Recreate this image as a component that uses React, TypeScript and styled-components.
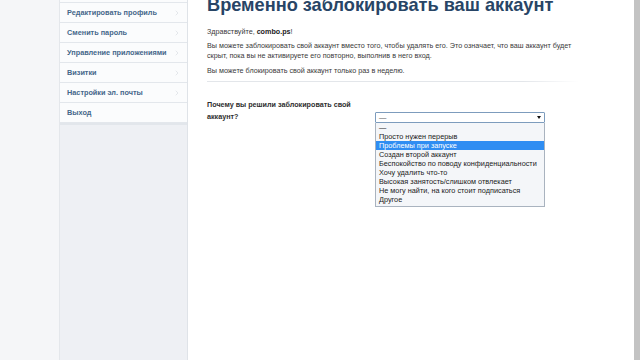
import React from 'react'
import styled, { createGlobalStyle } from 'styled-components'
import { ChevronRight } from 'lucide-react'

const GlobalStyle = createGlobalStyle`
  html, body {
    margin: 0;
    padding: 0;
    height: 100%;
    overflow: hidden;
    background: #f5f6f8;
    font-family: "Liberation Sans", Arial, sans-serif;
  }
  #root {
    height: 100%;
  }
`

const Viewport = styled.div`
  display: flex;
  height: 100vh;
  overflow: hidden;
`

/* the page is scrolled down a little, so everything starts above the top edge */
const Page = styled.div`
  flex: 1;
  display: flex;
  margin-top: -17px;
  min-height: calc(100vh + 17px);
`

const Gutter = styled.div`
  width: 59px;
  flex-shrink: 0;
  background: #f5f6f8;
  border-right: 1px solid #e4e7eb;
`

const Sidebar = styled.nav`
  width: 127px;
  flex-shrink: 0;
  background: #eef0f4;
  border-right: 1px solid #dfe3e8;
`

const Menu = styled.ul`
  list-style: none;
  margin: 0;
  padding: 0;
  border-bottom: 2px solid #e2e6eb;
`

const MenuItem = styled.li`
  height: 19px;
  display: flex;
  align-items: center;
  justify-content: space-between;
  padding: 0 6px 0 7px;
  background: #fbfcfd;
  border-bottom: 1px solid #e3e7ec;
  font-size: 7.3px;
  font-weight: bold;
  color: #45678a;
  white-space: nowrap;

  svg {
    color: #d8dce2;
    flex-shrink: 0;
  }
`

const Content = styled.main`
  flex: 1;
  background: #fff;
  padding: 10px 0 0 19px;
`

const Inner = styled.div`
  width: 372px;
`

const Title = styled.h1`
  margin: 0;
  font-size: 18.2px;
  line-height: 24px;
  font-weight: bold;
  color: #284566;
  white-space: nowrap;
`

const Text = styled.p<{ $gap?: number }>`
  margin: ${(p) => p.$gap ?? 0}px 0 0;
  font-size: 7.2px;
  line-height: 10px;
  color: #3a3a3a;

  b {
    color: #222;
  }
`

const Divider = styled.hr`
  margin: 5px 0 0;
  border: 0;
  height: 1px;
  background: linear-gradient(to right, #e3e6ea 0%, #e3e6ea 85%, #fff 100%);
`

const FormRow = styled.div`
  display: grid;
  grid-template-columns: 168px 170px;
  margin-top: 17px;
`

const Label = styled.label`
  font-size: 7.2px;
  line-height: 12px;
  font-weight: bold;
  color: #2e2e2e;
  padding-right: 14px;
`

const SelectWrap = styled.div`
  margin-top: 13px;
  display: flex;
  flex-direction: column;
`

const SelectBox = styled.div`
  height: 9px;
  border: 1px solid #7d9cbd;
  border-radius: 1px;
  background: #fff;
  display: flex;
  align-items: center;
  justify-content: space-between;
  padding: 0 3px;
  font-size: 7.4px;
  color: #555;
`

const Arrow = styled.span`
  width: 0;
  height: 0;
  border-left: 2px solid transparent;
  border-right: 2px solid transparent;
  border-top: 3px solid #111;
`

const Options = styled.ul`
  list-style: none;
  margin: 0;
  padding: 0 0 2px;
  background: #f4f6f9;
  border: 1px solid #a9b3bf;
  border-top: 0;
`

const Option = styled.li<{ $active?: boolean }>`
  height: 9px;
  line-height: 9px;
  padding: 0 3px;
  font-size: 7.3px;
  white-space: nowrap;
  color: ${(p) => (p.$active ? '#fff' : '#222')};
  background: ${(p) => (p.$active ? '#2f8df2' : 'transparent')};
`

const ScrollTrack = styled.div`
  width: 6px;
  flex-shrink: 0;
  background: #c3c3c3;
`

const menu = [
  { text: 'Общее', arrow: true },
  { text: 'Редактировать профиль', arrow: true },
  { text: 'Сменить пароль', arrow: true },
  { text: 'Управление приложениями', arrow: true },
  { text: 'Визитки', arrow: true },
  { text: 'Настройки эл. почты', arrow: true },
  { text: 'Выход', arrow: false },
]

const reasons = [
  '—',
  'Просто нужен перерыв',
  'Проблемы при запуске',
  'Создан второй аккаунт',
  'Беспокойство по поводу конфиденциальности',
  'Хочу удалить что-то',
  'Высокая занятость/слишком отвлекает',
  'Не могу найти, на кого стоит подписаться',
  'Другое',
]

export default function App() {
  return (
    <Viewport>
      <GlobalStyle />
      <Page>
        <Gutter />
        <Sidebar>
          <Menu>
            {menu.map((m) => (
              <MenuItem key={m.text}>
                <span>{m.text}</span>
                {m.arrow && <ChevronRight size={8} strokeWidth={2} />}
              </MenuItem>
            ))}
          </Menu>
        </Sidebar>
        <Content>
          <Inner>
            <Title>Временно заблокировать ваш аккаунт</Title>
            <Text $gap={10}>
              Здравствуйте, <b>combo.ps</b>!
            </Text>
            <Text $gap={4}>
              Вы можете заблокировать свой аккаунт вместо того, чтобы удалять его. Это означает, что ваш
              аккаунт будет скрыт, пока вы не активируете его повторно, выполнив в него вход.
            </Text>
            <Text $gap={5}>Вы можете блокировать свой аккаунт только раз в неделю.</Text>
            <Divider />
            <FormRow>
              <Label>Почему вы решили заблокировать свой аккаунт?</Label>
              <SelectWrap>
                <SelectBox>
                  <span>—</span>
                  <Arrow />
                </SelectBox>
                <Options>
                  {reasons.map((r, i) => (
                    <Option key={r} $active={i === 2}>
                      {r}
                    </Option>
                  ))}
                </Options>
              </SelectWrap>
            </FormRow>
          </Inner>
        </Content>
      </Page>
      <ScrollTrack />
    </Viewport>
  )
}
